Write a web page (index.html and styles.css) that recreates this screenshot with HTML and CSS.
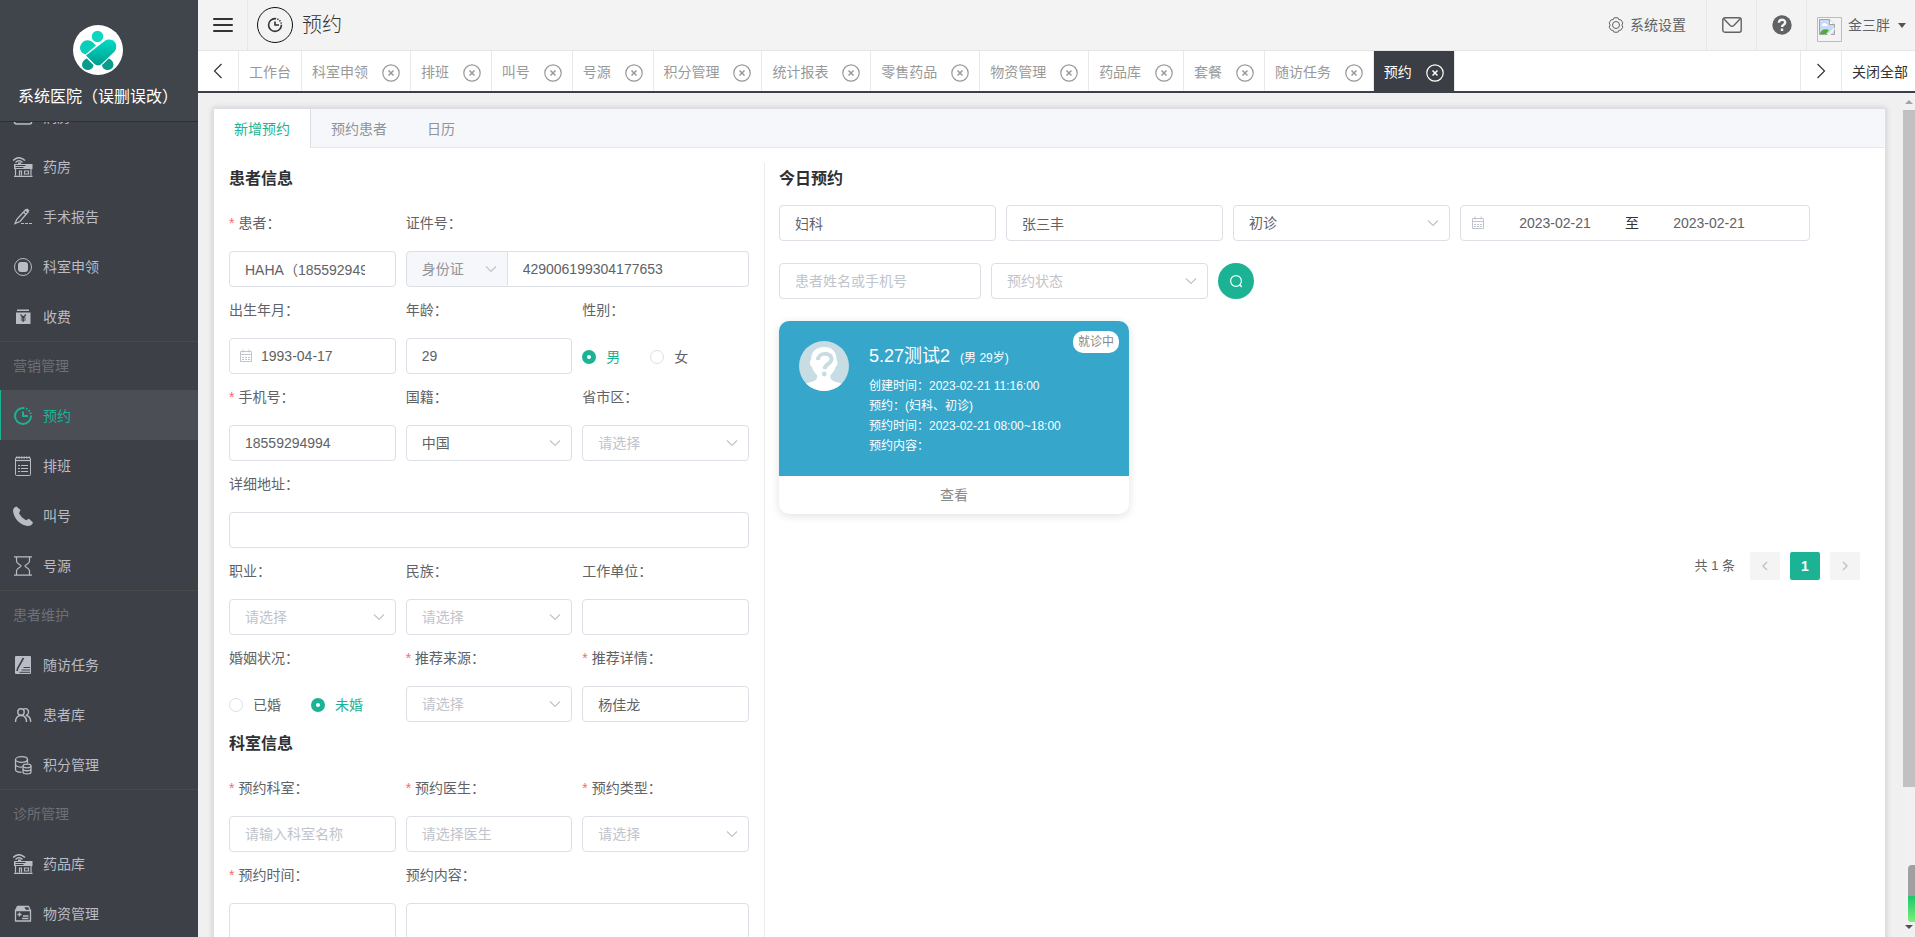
FILE: index.html
```html
<!DOCTYPE html>
<html lang="zh-CN">
<head>
<meta charset="utf-8">
<title>预约</title>
<link rel="stylesheet" href="styles.css">
</head>
<body>
<svg class="sprite" aria-hidden="true">
  <symbol id="i-ward" viewBox="0 0 20 20"><rect x="1.500" y="3" width="17" height="14" rx="2" fill="none" stroke="currentColor" stroke-width="1.600"/></symbol>
  <symbol id="i-pharmacy" viewBox="0 0 20 20"><g fill="none" stroke="currentColor"><path d="M0 3.500Q6-2 12 3.500M2.500 5.500Q6 2 9.500 5.500" stroke-width="1.500"/><path d="M2.500 11v7.500M18 11v7.500M1 19.300h18.500M6.500 18.500v-4.500h2v4.500M11.500 14h4v3h-4z" stroke-width="1.200"/></g><path fill="currentColor" d="M5 5.500h3v1.500h11.500V12H1V7h4z"/><path stroke="#3d4047" d="M2.500 8.500h10M2.500 10.500h8" fill="none"/></symbol>
  <symbol id="i-pen" viewBox="0 0 20 20"><path fill="none" stroke="currentColor" stroke-width="1.300" d="M2 16.500 4 12 12.500 3l2.500 2-8 9.500zM10.500 5l2.500 2.500"/><path fill="currentColor" d="m12 3 2-1.500 2.500 1.800L15 5.500z"/><path stroke="currentColor" d="M8 16.500h11" stroke-dasharray="3 1"/></symbol>
  <symbol id="i-apply" viewBox="0 0 20 20"><circle cx="10" cy="10" r="8.500" fill="none" stroke="currentColor"/><rect x="5" y="5" width="10" height="10" rx="3" fill="currentColor"/></symbol>
  <symbol id="i-charge" viewBox="0 0 20 20"><path fill="currentColor" d="M4 2.500h12V4H4zM3 5.500h14.500V17H3z"/><path fill="none" stroke="#3d4047" stroke-width="1.200" d="m7.500 7.500 2.700 3 2.700-3M10.200 10.500V15M7.800 11h5M7.800 13h5"/></symbol>
  <symbol id="i-clock" viewBox="0 0 20 20"><path fill="none" stroke="currentColor" stroke-width="2" d="M10 2a8 8 0 1 0 8 8"/><path fill="none" stroke="currentColor" stroke-width="2" stroke-dasharray="1.500 1.500" d="M10 2a8 8 0 0 1 8 8"/><path fill="none" stroke="currentColor" stroke-width="2" d="M10 5.500V10h5"/></symbol>
  <symbol id="i-schedule" viewBox="0 0 20 20"><g fill="none" stroke="currentColor"><rect x="2.500" y="1.500" width="15" height="18" rx="1"/><path d="M3 1.500h14" stroke-width="2" stroke-dasharray="1.500 1"/><path d="M3 4.500h14" stroke-width="1.200"/><path d="M5 9.500h2m1 0h7M5 12.500h2m1 0h7M5 15.500h2m1 0h7" stroke-width="1.200"/></g></symbol>
  <symbol id="i-phone" viewBox="0 0 20 20"><path fill="currentColor" d="M3.500.5C1.500 1 0 2.500 0 5c.8 7.500 7.500 14.500 15 15 2.500 0 4.500-1.500 5-3.500l-4-3.800-3 1.500C10 12.500 7.500 10 6 7.200L7.500 4z"/></symbol>
  <symbol id="i-hourglass" viewBox="0 0 20 20"><g fill="none" stroke="currentColor" stroke-width="1.200"><path d="M1 .8h18M1 19.200h18"/><path d="M3.500 1v4c0 3 4.500 3.500 4.500 5s-4.500 2-4.500 5v4M16.500 1v4c0 3-4.500 3.500-4.500 5s4.500 2 4.500 5v4"/></g></symbol>
  <symbol id="i-task" viewBox="0 0 20 20"><rect x="2" y="1" width="16" height="18" rx="1" fill="currentColor"/><path fill="none" stroke="#3d4047" stroke-width="1.600" d="m4 16 .8-3L10.500 3"/><path fill="none" stroke="#3d4047" d="M10.500 12.500H17M8.500 15H17M6.500 17.300H17"/></symbol>
  <symbol id="i-users" viewBox="0 0 20 20"><g fill="none" stroke="currentColor" stroke-width="1.400"><circle cx="8" cy="7" r="3.200"/><path d="M2.500 17c0-4 2-6.500 5.500-6.500s5.500 2.500 5.500 6.500M10.500 4.200c2.500-1.500 5.500.3 5 3.300-.3 1.700-1.500 2.500-2.500 2.800 2.800.6 4.700 3.200 4.700 6.700"/></g></symbol>
  <symbol id="i-points" viewBox="0 0 20 20"><g fill="none" stroke="currentColor" stroke-width="1.300"><ellipse cx="8.500" cy="4.500" rx="6" ry="2.800"/><path d="M2.500 4.500v10c0 1.600 2.500 2.800 6 2.800M14.500 4.500v4M2.500 9.500c0 1.700 3 2.800 6.500 2.600"/><ellipse cx="14" cy="11" rx="4" ry="1.800"/><path d="M10 11v6c0 2.500 8 2.500 8 0v-6M10 14c0 2.300 8 2.300 8 0"/></g></symbol>
  <symbol id="i-goods" viewBox="0 0 20 20"><path fill="none" stroke="currentColor" stroke-width="1.300" d="M2.500 6.500h15V17h-15zM2.500 6.500l2-4h11l2 4"/><path fill="currentColor" d="M3 6l2-3.500h6L13 6z"/><path stroke="currentColor" stroke-width="1.300" d="M4.500 10.500h4M6.500 8.500v4M10 12h5.500M9 14.500h6.500"/></symbol>
  <symbol id="i-down" viewBox="0 0 14 14"><path fill="none" stroke="currentColor" stroke-width="1.200" d="m2 4.500 5 5 5-5"/></symbol>
  <symbol id="i-close" viewBox="0 0 18 18"><circle cx="9" cy="9" r="8.200" fill="none" stroke="currentColor" stroke-width="1.200"/><path fill="none" stroke="currentColor" stroke-width="1.500" d="m6.500 6.500 5 5m0-5-5 5"/></symbol>
  <symbol id="i-date" viewBox="0 0 14 14"><path fill="none" stroke="currentColor" d="M1.500 2.500h11v10h-11zM1.500 5.500h11M4 .5v3M10 .5v3"/><path fill="none" stroke="currentColor" stroke-dasharray="2 1" d="M3 8.500h8M3 10.500h8"/></symbol>
  <symbol id="i-left" viewBox="0 0 16 16"><path fill="none" stroke="currentColor" stroke-width="1.200" d="M11.500 1 4.500 8l7 7"/></symbol>
  <symbol id="i-right" viewBox="0 0 16 16"><path fill="none" stroke="currentColor" stroke-width="1.200" d="m4.500 1 7 7-7 7"/></symbol>
</svg>

<div class="app">
  <aside class="sidebar">
    <div class="brand">
      <svg class="brand-logo" viewBox="0 0 50 50" aria-hidden="true">
        <defs><linearGradient id="lg" x1="0" y1="0" x2="0" y2="1"><stop offset="0" stop-color="#00dcc6"/><stop offset="1" stop-color="#029c8e"/></linearGradient></defs>
        <circle cx="25" cy="25" r="25" fill="#fff"/>
        <circle cx="24.500" cy="11.500" r="5.700" fill="#0fd5c0"/>
        <path fill="#089c8e" d="M14 33.500q4 4.500 6.500 6.500c0 3-3 5-6 5-4 0-6.500-4-5-7.500 1-2 2.500-3.500 4.500-4zM35.500 33.500q-4 4.500-6.500 6.500c0 3 3 5 6 5 4 0 6.500-4 5-7.500-1-2-2.500-3.500-4.500-4z"/>
        <path fill="#0bcdb9" d="M12.500 29.500C8 28 6 24 7.500 20.500c2-5.500 9-7 13-2.500l2.500 2.500z"/>
        <path fill="url(#lg)" d="M13 30.500 31 16.500c5-4.500 14-1 12 7-.5 2-1.500 3-3 4.500L29 38.500c-2.500 2.500-5.500 2.500-8 0z"/>
      </svg>
      <div class="brand-name">系统医院（误删误改）</div>
    </div>
    <nav class="menu">
      <ul class="menu-list">
        <li><a href="#"><svg class="ico"><use href="#i-ward"/></svg>病房</a></li>
        <li><a href="#"><svg class="ico"><use href="#i-pharmacy"/></svg>药房</a></li>
        <li><a href="#"><svg class="ico"><use href="#i-pen"/></svg>手术报告</a></li>
        <li><a href="#"><svg class="ico"><use href="#i-apply"/></svg>科室申领</a></li>
        <li><a href="#"><svg class="ico"><use href="#i-charge"/></svg>收费</a></li>
        <li class="menu-title">营销管理</li>
        <li><a href="#" class="active"><svg class="ico"><use href="#i-clock"/></svg>预约</a></li>
        <li><a href="#"><svg class="ico"><use href="#i-schedule"/></svg>排班</a></li>
        <li><a href="#"><svg class="ico"><use href="#i-phone"/></svg>叫号</a></li>
        <li><a href="#"><svg class="ico"><use href="#i-hourglass"/></svg>号源</a></li>
        <li class="menu-title">患者维护</li>
        <li><a href="#"><svg class="ico"><use href="#i-task"/></svg>随访任务</a></li>
        <li><a href="#"><svg class="ico"><use href="#i-users"/></svg>患者库</a></li>
        <li><a href="#"><svg class="ico"><use href="#i-points"/></svg>积分管理</a></li>
        <li class="menu-title">诊所管理</li>
        <li><a href="#"><svg class="ico"><use href="#i-pharmacy"/></svg>药品库</a></li>
        <li><a href="#"><svg class="ico"><use href="#i-goods"/></svg>物资管理</a></li>
      </ul>
    </nav>
  </aside>

  <div class="main">
    <header class="topbar">
      <button class="top-cell burger" aria-label="菜单"><span></span><span></span><span></span></button>
      <span class="title-icon"><svg viewBox="0 0 20 20" width="16" height="16"><use href="#i-clock"/></svg></span>
      <h1 class="page-title">预约</h1>
      <a href="#" class="settings">
        <svg viewBox="0 0 16 16" width="16" height="16" fill="none" stroke="currentColor"><path d="M6 .8h4l.8 1.800 2 .2 2 3-.9 2.200.9 2.200-2 3-2 .2-.8 1.800H6l-.8-1.800-2-.2-2-3L2.100 8l-.9-2.200 2-3 2-.2z"/><circle cx="8" cy="8" r="3.500"/></svg>系统设置</a>
      <button class="top-cell" aria-label="消息"><svg viewBox="0 0 20 16" width="20" height="16" fill="none" stroke="currentColor" stroke-width="1.400"><rect x=".8" y=".8" width="18.400" height="14.400" rx="2"/><path d="m1.500 1.500 6.700 7c1.100 1 2.500 1 3.600 0l6.700-7"/></svg></button>
      <button class="top-cell" aria-label="帮助"><svg viewBox="0 0 20 20" width="20" height="20"><circle cx="10" cy="10" r="9.700" fill="currentColor"/><path fill="none" stroke="#f3f3f3" stroke-width="2.400" d="M6.800 7.800c0-4 6.400-4 6.400-.4 0 2.300-3.200 2.300-3.200 4.600M10 13.600V16"/></svg></button>
      <button class="user">
        <svg class="user-pic" viewBox="0 0 25 25" aria-hidden="true"><path fill="none" stroke="#bcbcbc" d="M.5.500h24v24H.5z"/><path fill="#c9daf8" stroke="#a3a3a3" d="M2.500 2.500h10l5 5v10h-15z"/><path fill="#fff" stroke="#a3a3a3" d="M12.500 2.500v5h5"/><path fill="#fff" d="M5 8c0-2 3-3 4-1 2 0 2 2 1 2H5z"/><path fill="#4fac35" d="M3 17c1-4 4-6 9-4l-3 4z"/><path fill="#f3f3f3" d="m10 18 7.500-8v3l-4 5z"/></svg>
        金三胖<span class="caret"></span>
      </button>
    </header>

    <nav class="tabs">
      <button class="tab-arrow" aria-label="向左"><svg width="16" height="16"><use href="#i-left"/></svg></button>
      <a href="#" class="tab">工作台</a>
      <a href="#" class="tab">科室申领 <svg class="x"><use href="#i-close"/></svg></a>
      <a href="#" class="tab">排班 <svg class="x"><use href="#i-close"/></svg></a>
      <a href="#" class="tab">叫号 <svg class="x"><use href="#i-close"/></svg></a>
      <a href="#" class="tab">号源 <svg class="x"><use href="#i-close"/></svg></a>
      <a href="#" class="tab">积分管理 <svg class="x"><use href="#i-close"/></svg></a>
      <a href="#" class="tab">统计报表 <svg class="x"><use href="#i-close"/></svg></a>
      <a href="#" class="tab">零售药品 <svg class="x"><use href="#i-close"/></svg></a>
      <a href="#" class="tab">物资管理 <svg class="x"><use href="#i-close"/></svg></a>
      <a href="#" class="tab">药品库 <svg class="x"><use href="#i-close"/></svg></a>
      <a href="#" class="tab">套餐 <svg class="x"><use href="#i-close"/></svg></a>
      <a href="#" class="tab">随访任务 <svg class="x"><use href="#i-close"/></svg></a>
      <a href="#" class="tab current">预约 <svg class="x"><use href="#i-close"/></svg></a>
      <button class="tab-arrow tab-next" aria-label="向右"><svg width="16" height="16"><use href="#i-right"/></svg></button>
      <button class="close-all">关闭全部</button>
    </nav>

    <div class="body">
      <main class="panel">
        <div class="panel-tabs">
          <button class="panel-tab on">新增预约</button><button class="panel-tab">预约患者</button><button class="panel-tab">日历</button>
        </div>
        <div class="panel-body">
          <form class="left">
            <h2>患者信息</h2>
            <div class="grid">
              <div class="field"><label class="req" for="f1">患者：</label><input class="box pad" id="f1" value="HAHA（18559294994）"></div>
              <div class="field span2"><label for="f2">证件号：</label>
                <div class="group"><span class="sel idtype"><select class="box" aria-label="证件类型"><option>身份证</option></select><svg class="down"><use href="#i-down"/></svg></span><input class="box idno" id="f2" value="429006199304177653"></div></div>
              <div class="field"><label for="f3">出生年月：</label><span class="sel"><svg class="cal"><use href="#i-date"/></svg><input class="box dated" id="f3" value="1993-04-17"></span></div>
              <div class="field"><label for="f4">年龄：</label><input class="box" id="f4" value="29"></div>
              <div class="field"><span class="lab">性别：</span><div class="radios"><label><input type="radio" name="sex" checked><span>男</span></label><label><input type="radio" name="sex"><span>女</span></label></div></div>
              <div class="field"><label class="req" for="f5">手机号：</label><input class="box" id="f5" value="18559294994"></div>
              <div class="field"><label for="f6">国籍：</label><span class="sel"><select class="box" id="f6"><option>中国</option></select><svg class="down"><use href="#i-down"/></svg></span></div>
              <div class="field"><label for="f7">省市区：</label><span class="sel"><select class="box empty" id="f7"><option>请选择</option></select><svg class="down"><use href="#i-down"/></svg></span></div>
              <div class="field span3"><label for="f8">详细地址：</label><input class="box" id="f8"></div>
              <div class="field"><label for="f9">职业：</label><span class="sel"><select class="box empty" id="f9"><option>请选择</option></select><svg class="down"><use href="#i-down"/></svg></span></div>
              <div class="field"><label for="f10">民族：</label><span class="sel"><select class="box empty" id="f10"><option>请选择</option></select><svg class="down"><use href="#i-down"/></svg></span></div>
              <div class="field"><label for="f11">工作单位：</label><input class="box" id="f11"></div>
              <div class="field"><span class="lab">婚姻状况：</span><div class="radios"><label><input type="radio" name="mar"><span>已婚</span></label><label><input type="radio" name="mar" checked><span>未婚</span></label></div></div>
              <div class="field"><label class="req" for="f12">推荐来源：</label><span class="sel"><select class="box empty" id="f12"><option>请选择</option></select><svg class="down"><use href="#i-down"/></svg></span></div>
              <div class="field"><label class="req" for="f13">推荐详情：</label><input class="box" id="f13" value="杨佳龙"></div>
            </div>
            <h2 class="second">科室信息</h2>
            <div class="grid">
              <div class="field"><label class="req" for="f14">预约科室：</label><input class="box" id="f14" placeholder="请输入科室名称"></div>
              <div class="field"><label class="req" for="f15">预约医生：</label><input class="box" id="f15" placeholder="请选择医生"></div>
              <div class="field"><label class="req" for="f16">预约类型：</label><span class="sel"><select class="box empty" id="f16"><option>请选择</option></select><svg class="down"><use href="#i-down"/></svg></span></div>
              <div class="field"><label class="req" for="f17">预约时间：</label><input class="box tall" id="f17"></div>
              <div class="field span2"><label for="f18">预约内容：</label><textarea class="box tall" id="f18"></textarea></div>
            </div>
          </form>

          <section class="right">
            <h2>今日预约</h2>
            <div class="filters">
              <input class="box w-std" aria-label="科室" value="妇科">
              <input class="box w-std" aria-label="医生" value="张三丰">
              <span class="sel w-std"><select class="box" aria-label="预约类型"><option>初诊</option></select><svg class="down"><use href="#i-down"/></svg></span>
              <div class="box range"><svg class="range-ico"><use href="#i-date"/></svg><input aria-label="开始日期" value="2023-02-21"><span>至</span><input aria-label="结束日期" value="2023-02-21"></div>
            </div>
            <div class="filters">
              <input class="box w-name" aria-label="患者" placeholder="患者姓名或手机号">
              <span class="sel w-std"><select class="box empty" aria-label="预约状态"><option>预约状态</option></select><svg class="down"><use href="#i-down"/></svg></span>
              <button class="search" aria-label="搜索"><svg viewBox="0 0 14 14" width="14" height="14" fill="none" stroke="currentColor" stroke-width="1.200"><circle cx="7" cy="7" r="5.400"/><path d="m10.500 10.500 2.300 2.500"/></svg></button>
            </div>
            <article class="card">
              <div class="card-main">
                <svg class="avatar" viewBox="0 0 50 50" aria-hidden="true"><defs><clipPath id="av"><circle cx="25" cy="25" r="25"/></clipPath></defs><g clip-path="url(#av)"><path fill="#c8dce4" d="M0 0h50v50H0z"/><path fill="#fff" d="M25 6c8 0 13 5 12.500 13 2 1 1 6-1 7-1 4-3 6-5 8-.5 3 .5 5 3 6 4 1.500 8 2 10 4v8H5v-8c2-2 6-2.500 10-4 2.500-1 3.500-3 3-6-2-2-4-4-5-8-2-1-3-6-1-7C12 11 17 6 25 6z"/></g><path fill="none" stroke="#c8dce4" stroke-width="4" d="M19 19c0-8 13.500-8 13.500-1 0 5-6.500 4.500-7 10"/><circle cx="25.300" cy="33" r="2.400" fill="#c8dce4"/></svg>
                <div class="info">
                  <div class="name">5.27测试2<small>(男 29岁)</small></div>
                  <p>创建时间：2023-02-21 11:16:00</p>
                  <p>预约：(妇科、初诊)</p>
                  <p>预约时间：2023-02-21 08:00~18:00</p>
                  <p>预约内容：</p>
                </div>
                <span class="badge">就诊中</span>
              </div>
              <button class="view">查看</button>
            </article>
            <div class="pager">
              <span>共 1 条</span>
              <button class="pg" disabled aria-label="上一页"><svg viewBox="0 0 12 12" width="12" height="12"><path fill="none" stroke="currentColor" stroke-width="1.500" d="M8 2 4 6l4 4"/></svg></button>
              <button class="pg pg-on">1</button>
              <button class="pg" disabled aria-label="下一页"><svg viewBox="0 0 12 12" width="12" height="12"><path fill="none" stroke="currentColor" stroke-width="1.500" d="m4 2 4 4-4 4"/></svg></button>
            </div>
          </section>
        </div>
      </main>
      <div class="scroll" aria-hidden="true"><span class="sc-up"></span><span class="sc-thumb"></span><span class="sc-rest"></span><span class="sc-down"></span></div>
      <span class="meter" aria-hidden="true"><span></span></span>
    </div>
  </div>
</div>
</body>
</html>
```
FILE: styles.css
```css
* { box-sizing: border-box; }
body { margin: 0; font: 14px/20px "Liberation Sans", "Noto Sans CJK SC", sans-serif; color: #606266; }
button, input, select, textarea { font: inherit; color: inherit; margin: 0; }
button { background: none; border: 0; padding: 0; cursor: pointer; }
a { color: inherit; text-decoration: none; }
ul { list-style: none; margin: 0; padding: 0; }
h1, h2, p { margin: 0; }
svg { display: block; flex: none; }
.sprite { display: none; }

.app { display: flex; height: 100vh; overflow: hidden; }
.sidebar { flex: none; width: 198px; background: #3d4047; display: flex; flex-direction: column; }
.brand { flex: none; height: 122px; padding: 25px 2px 0 0; background: #40454b; border-bottom: 1px solid #2d2f33; display: flex; flex-direction: column; align-items: center; gap: 10px; }
.brand-logo { width: 50px; height: 50px; }
.brand-name { font-size: 16px; line-height: 24px; color: #fff; white-space: nowrap; }
.menu { flex: 1; min-height: 0; overflow: hidden; }
.menu-list { margin-top: -31px; }
.menu-list a { display: flex; align-items: center; gap: 10px; height: 50px; padding: 1px 0 0 12px; border-left: 1px solid transparent; color: #b9bcc4; }
.menu-list a.active { background: #4b4e55; border-left-color: #1cb394; color: #1cb394; }
.ico { width: 20px; height: 20px; }
.menu-title { height: 49px; border-top: 1px solid #4a4a4a; padding-left: 13px; line-height: 48px; color: #6d7076; }

.main { flex: 1; min-width: 0; display: flex; flex-direction: column; }
.topbar { flex: none; height: 51px; background: #f3f3f3; border-bottom: 1px solid #e4e4e4; display: flex; align-items: center; color: #606266; }
.top-cell { width: 50px; height: 50px; border-right: 1px solid #e9e6e6; display: flex; align-items: center; justify-content: center; }
.burger { flex-direction: column; gap: 4px; }
.burger span { width: 20px; height: 2px; background: #333; border-radius: 1px; }
.title-icon { width: 36px; height: 36px; margin: 0 9px; border: 1px solid #111; border-radius: 50%; display: flex; align-items: center; justify-content: center; color: #333; }
.page-title { font-size: 20px; line-height: 30px; font-weight: 300; color: #333; }
.settings { height: 50px; margin-left: auto; padding-right: 20px; border-right: 1px solid #e9e6e6; display: flex; align-items: center; gap: 6px; }
.user { height: 50px; padding: 0 9px 0 10px; display: flex; align-items: center; gap: 6px; }
.user-pic { width: 25px; height: 25px; margin-top: 8px; }
.caret { border: 4px solid transparent; border-top: 5px solid #555; border-bottom: 0; margin-left: 2px; }

.tabs { flex: none; height: 42px; background: #fff; border-bottom: 2px solid #3b3f47; display: flex; overflow: hidden; }
.tab-arrow { width: 41px; border-right: 1px solid #e8e8e8; color: #333; display: flex; align-items: center; justify-content: center; }
.tab { display: flex; align-items: center; gap: 10px; padding: 2px 10px 0; border-right: 1px solid #e8e8e8; color: #999; white-space: pre; }
.x { width: 18px; height: 18px; margin-top: 2px; }
.tab.current { background: #3b3e45; color: #fff; }
.tab-next { margin-left: auto; border-left: 1px solid #e8e8e8; width: 42px; }
.close-all { padding: 2px 7px 0 10px; color: #333; white-space: nowrap; }

.body { flex: 1; min-height: 0; position: relative; display: flex; background: #f0f0f0; overflow: hidden; }
.panel { flex: 1; min-width: 0; align-self: flex-start; margin: 15px 17px 0 15px; background: #fff; border: 1px solid #dcdfe6; box-shadow: 0 0 6px rgba(0, 0, 0, .16); }
.panel-tabs { height: 39px; background: #f5f7fa; border-bottom: 1px solid #e4e7ed; display: flex; }
.panel-tab { height: 39px; padding: 0 20px; color: #909399; }
.panel-tab.on { background: #fff; color: #1cb394; border-right: 1px solid #dcdfe6; }
.panel-body { display: grid; grid-template-columns: minmax(0, 535fr) minmax(0, 1106fr); padding: 15px; }
.left { padding-right: 15px; }
.right { border-left: 1px solid #ebebeb; padding-left: 14px; }
h2 { font-size: 16px; line-height: 32px; font-weight: 700; color: #303133; margin-bottom: 10px; }
h2.second { margin-top: 6px; }
.grid { display: grid; grid-template-columns: repeat(3, minmax(0, 1fr)); gap: 5px 10px; }
.span2 { grid-column: span 2; }
.span3 { grid-column: span 3; }
.field { display: flex; flex-direction: column; gap: 10px; }
.field > label, .lab { line-height: 36px; height: 36px; }
.req::before { content: "*"; color: #f56c6c; margin-right: 4px; }
.box { width: 100%; height: 36px; border: 1px solid #dcdfe6; border-radius: 4px; background: #fff; padding: 0 15px; display: block; outline: 0; appearance: none; }
.box::placeholder { color: #c0c4cc; opacity: 1; }
.box.pad { padding-right: 30px; }
.box.tall { height: 54px; resize: none; }
.box.empty { color: #c0c4cc; }
.sel { position: relative; display: block; }
.down { position: absolute; right: 10px; top: 11px; width: 14px; height: 14px; color: #c0c4cc; pointer-events: none; }
.cal { position: absolute; left: 10px; top: 11px; width: 14px; height: 14px; color: #c0c4cc; }
.dated { padding-left: 31px; }
.group { display: flex; }
.idtype { flex: none; width: 102px; }
.idtype .box { background: #f5f7fa; color: #909399; border-radius: 4px 0 0 4px; }
.idno { flex: 1; min-width: 0; border-left: 0; border-radius: 0 4px 4px 0; }
.radios { height: 36px; padding-top: 2px; display: flex; align-items: center; gap: 30px; }
.radios label { display: flex; align-items: center; gap: 10px; }
.radios input { appearance: none; width: 14px; height: 14px; border: 1px solid #dcdfe6; border-radius: 50%; background: #fff; }
.radios input:checked { border: 5px solid #1cb394; }
.radios input:checked + span { color: #1cb394; }

.filters { display: flex; flex-wrap: wrap; gap: 10px; margin-bottom: 22px; }
.w-std { width: 217px; }
.w-name { width: 202px; }
.range { width: 350px; padding: 0 10px; display: flex; align-items: center; }
.range-ico { width: 14px; height: 14px; color: #c0c4cc; }
.range input { width: 140px; border: 0; padding: 0; background: none; text-align: center; outline: 0; }
.range span { width: 14px; color: #303133; }
.search { width: 36px; height: 36px; border-radius: 50%; background: #1cb394; color: #fff; display: flex; align-items: center; justify-content: center; }
.card { width: 350px; border-radius: 10px; overflow: hidden; background: #fff; box-shadow: 0 2px 10px rgba(0, 0, 0, .12); }
.card-main { position: relative; height: 155px; background: #36a6cb; color: #fff; padding: 20px; display: flex; gap: 20px; font-size: 12px; }
.avatar { width: 50px; height: 50px; }
.info { line-height: 20px; }
.name { font-size: 18px; line-height: 30px; margin-bottom: 3px; }
.name small { font-size: 12px; margin-left: 10px; }
.badge { position: absolute; top: 10px; right: 10px; height: 22px; padding: 0 5px; border-radius: 10px; background: #fff; color: #888; line-height: 22px; }
.view { display: block; width: 100%; height: 38px; color: #888; }
.pager { display: flex; justify-content: flex-end; align-items: center; gap: 10px; margin-top: 38px; padding-right: 10px; }
.pager > span { margin-right: 5px; font-size: 13px; }
.pg { width: 30px; height: 28px; border-radius: 2px; background: #f4f4f5; color: #c0c4cc; display: flex; align-items: center; justify-content: center; font-weight: 700; }
.pg-on { background: #1cb394; color: #fff; }

.scroll { flex: none; width: 12px; background: #f1f1f1; display: flex; flex-direction: column; align-items: center; }
.sc-up { border: 4px solid transparent; border-top: 0; border-bottom: 4px solid #a3a3a3; margin: 7px 0 6px; }
.sc-thumb { width: 12px; flex: 677; background: #c1c1c1; }
.sc-rest { flex: 138; }
.sc-down { border: 4px solid transparent; border-bottom: 0; border-top: 4px solid #505050; margin-bottom: 8px; }
.meter { position: absolute; right: 0; bottom: 15px; width: 7px; height: 57px; border-radius: 4px 0 0 4px; background: #a0a0a0; display: flex; align-items: flex-end; overflow: hidden; }
.meter span { width: 7px; height: 26px; background: linear-gradient(#1fc66a, #7af07a); }
```
